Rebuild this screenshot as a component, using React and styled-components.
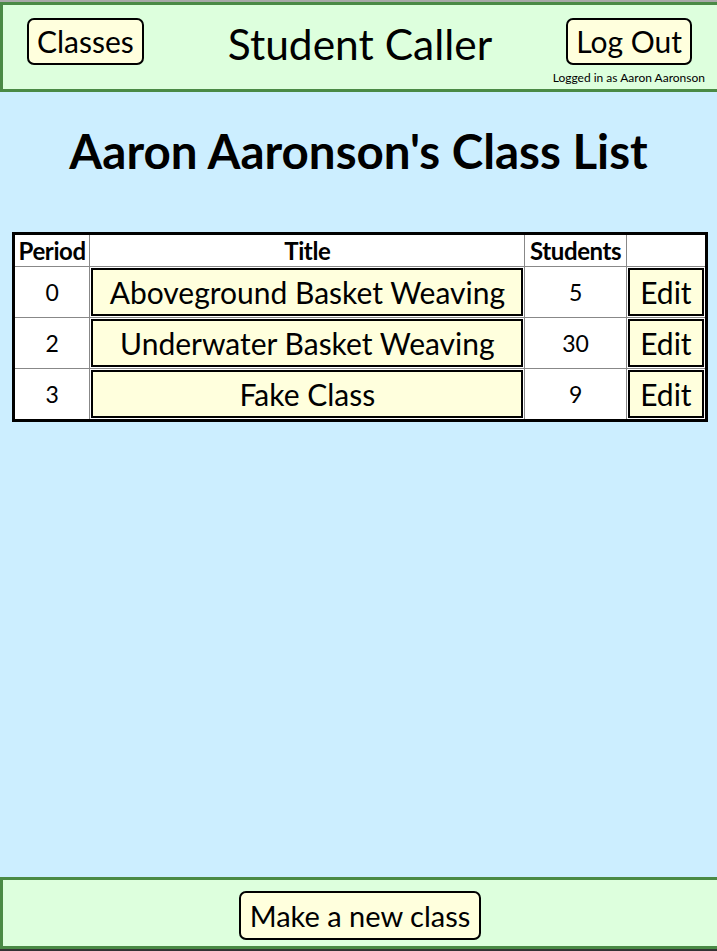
import React from "react";
import styled, { createGlobalStyle } from "styled-components";

const GlobalStyle = createGlobalStyle`
  html, body {
    margin: 0;
    padding: 0;
    overflow: hidden;
  }
  body {
    font-family: Lato, "Open Sans", sans-serif;
    color: #000;
  }
`;

const classes = [
  { period: 0, title: "Aboveground Basket Weaving", students: 5 },
  { period: 2, title: "Underwater Basket Weaving", students: 30 },
  { period: 3, title: "Fake Class", students: 9 },
];

const App = () => {
  return (
    <Page>
      <GlobalStyle />
      <Header>
        <HeaderLeft>
          <RoundButton>Classes</RoundButton>
        </HeaderLeft>
        <AppTitle>Student Caller</AppTitle>
        <HeaderRight>
          <RoundButton>Log Out</RoundButton>
          <LoggedIn>Logged in as Aaron Aaronson</LoggedIn>
        </HeaderRight>
      </Header>

      <Main>
        <Heading>Aaron Aaronson's Class List</Heading>
        <ClassTable>
          <colgroup>
            <col style={{ width: 76 }} />
            <col style={{ width: 434 }} />
            <col style={{ width: 101 }} />
            <col style={{ width: 80 }} />
          </colgroup>
          <thead>
            <tr>
              <HeadCell>Period</HeadCell>
              <HeadCell>Title</HeadCell>
              <HeadCell>Students</HeadCell>
              <HeadCell />
            </tr>
          </thead>
          <tbody>
            {classes.map(c => (
              <tr key={c.period}>
                <NumCell>{c.period}</NumCell>
                <BtnCell>
                  <CellButton>{c.title}</CellButton>
                </BtnCell>
                <NumCell>{c.students}</NumCell>
                <BtnCell>
                  <CellButton>Edit</CellButton>
                </BtnCell>
              </tr>
            ))}
          </tbody>
        </ClassTable>
      </Main>

      <Footer>
        <RoundButton $tight>Make a new class</RoundButton>
      </Footer>
    </Page>
  );
};

/*
==== Component Styles ====
*/

const Page = styled.div`
  height: 951px;
  box-sizing: border-box;
  display: flex;
  flex-direction: column;
  border-top: 2px solid #a8a8a8;
  border-bottom: 2px solid #333;
  overflow: hidden;
`;

const Header = styled.header`
  flex: none;
  height: 84px;
  border: 3px solid #4a8a45;
  border-right: none;
  background: #ddffdd;
  display: grid;
  grid-template-columns: 1fr auto 1fr;
  align-items: start;
`;

const HeaderLeft = styled.div`
  padding: 13px 0 0 24px;
`;

const HeaderRight = styled.div`
  justify-self: end;
  padding: 13px 25px 0 0;
  display: flex;
  flex-direction: column;
  align-items: flex-end;
`;

const AppTitle = styled.h1`
  margin: 0;
  padding-top: 14px;
  font-size: 42.5px;
  font-weight: 400;
  line-height: 50px;
`;

const RoundButton = styled.button`
  font-family: Lato, sans-serif;
  font-size: ${p => (p.$tight ? "29px" : "30px")};
  line-height: 35px;
  padding: ${p => (p.$tight ? "5px 9px" : "4px 8px")};
  margin-top: ${p => (p.$tight ? "4px" : "0")};
  background: #ffffdd;
  color: #000;
  border: 2px solid #000;
  border-radius: 7px;
`;

const LoggedIn = styled.div`
  font-size: 12px;
  margin-top: 5px;
  margin-right: -13px;
`;

const Main = styled.main`
  flex: 1;
  background: #cceeff;
  display: flex;
  flex-direction: column;
  align-items: center;
`;

const Heading = styled.h2`
  margin: 30px 0 52px;
  font-size: 47.5px;
  font-weight: 700;
  line-height: 58px;
`;

const ClassTable = styled.table`
  border-collapse: collapse;
  border: 3px solid #000;
  background: #fff;
  table-layout: fixed;
  width: 696px;
  margin-left: 3px;
`;

const HeadCell = styled.th`
  font-size: 24px;
  font-weight: 700;
  height: 31px;
  padding: 0;
  border: 1px solid #888;
  letter-spacing: -0.4px;
`;

const NumCell = styled.td`
  text-align: center;
  font-size: 23px;
  height: 50px;
  padding: 0;
  border: 1px solid #888;
`;

const BtnCell = styled.td`
  padding: 1px;
  border: 1px solid #888;
`;

const CellButton = styled.button`
  display: block;
  width: 100%;
  height: 48px;
  font-family: Lato, sans-serif;
  font-size: 30px;
  background: #ffffdd;
  color: #000;
  border: 2px solid #000;
  border-radius: 0;
  padding: 0;
`;

const Footer = styled.footer`
  flex: none;
  height: 66px;
  border: 3px solid #4a8a45;
  border-right: none;
  background: #ddffdd;
  display: flex;
  align-items: center;
  justify-content: center;
`;

export default App;
